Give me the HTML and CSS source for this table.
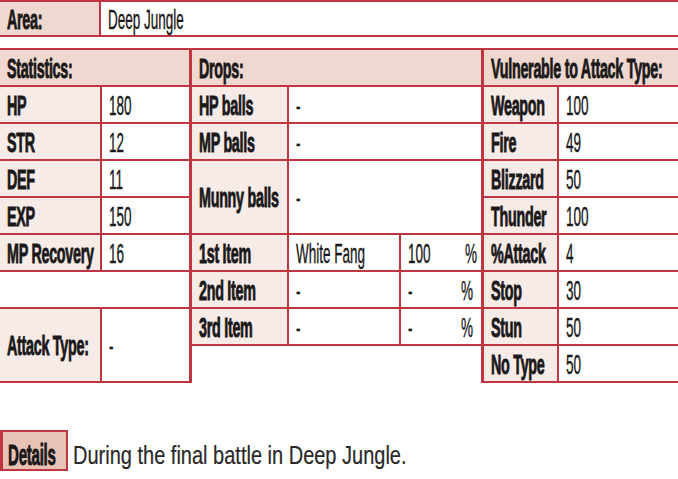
FILE: index.html
```html
<!DOCTYPE html>
<html>
<head>
<meta charset="utf-8">
<link rel="stylesheet" href="styles.css">
</head>
<body>
<div class="area">
  <div class="cell hd"><span class="t b">Area:</span></div>
  <div class="cell val"><span class="t">Deep Jungle</span></div>
</div>

<div class="main">
  <div class="col stats">
    <div class="cell hd span2"><span class="t b">Statistics:</span></div>
    <div class="cell lbl"><span class="t b">HP</span></div>
    <div class="cell val"><span class="t">180</span></div>
    <div class="cell lbl"><span class="t b">STR</span></div>
    <div class="cell val"><span class="t">12</span></div>
    <div class="cell lbl"><span class="t b">DEF</span></div>
    <div class="cell val"><span class="t">11</span></div>
    <div class="cell lbl"><span class="t b">EXP</span></div>
    <div class="cell val"><span class="t">150</span></div>
    <div class="cell lbl"><span class="t b">MP Recovery</span></div>
    <div class="cell val"><span class="t">16</span></div>
    <div class="cell val span2"></div>
    <div class="cell lbl rows2"><span class="t b">Attack Type:</span></div>
    <div class="cell val rows2"><span class="t">-</span></div>
  </div>

  <div class="col drops">
    <div class="cell hd span3"><span class="t b">Drops:</span></div>
    <div class="cell lbl"><span class="t b">HP balls</span></div>
    <div class="cell val span2"><span class="t">-</span></div>
    <div class="cell lbl"><span class="t b">MP balls</span></div>
    <div class="cell val span2"><span class="t">-</span></div>
    <div class="cell lbl rows2"><span class="t b">Munny balls</span></div>
    <div class="cell val span2 rows2"><span class="t">-</span></div>
    <div class="cell lbl"><span class="t b">1st Item</span></div>
    <div class="cell val"><span class="t">White Fang</span></div>
    <div class="cell val pct"><span class="t">100</span><span class="t r">%</span></div>
    <div class="cell lbl"><span class="t b">2nd Item</span></div>
    <div class="cell val"><span class="t">-</span></div>
    <div class="cell val pct"><span class="t">-</span><span class="t r">%</span></div>
    <div class="cell lbl"><span class="t b">3rd Item</span></div>
    <div class="cell val"><span class="t">-</span></div>
    <div class="cell val pct"><span class="t">-</span><span class="t r">%</span></div>
    <div class="cell val span3 tail"></div>
  </div>

  <div class="col vuln">
    <div class="cell hd span2"><span class="t b">Vulnerable to Attack Type:</span></div>
    <div class="cell lbl"><span class="t b">Weapon</span></div>
    <div class="cell val"><span class="t">100</span></div>
    <div class="cell lbl"><span class="t b">Fire</span></div>
    <div class="cell val"><span class="t">49</span></div>
    <div class="cell lbl"><span class="t b">Blizzard</span></div>
    <div class="cell val"><span class="t">50</span></div>
    <div class="cell lbl"><span class="t b">Thunder</span></div>
    <div class="cell val"><span class="t">100</span></div>
    <div class="cell lbl"><span class="t b">%Attack</span></div>
    <div class="cell val"><span class="t">4</span></div>
    <div class="cell lbl"><span class="t b">Stop</span></div>
    <div class="cell val"><span class="t">30</span></div>
    <div class="cell lbl"><span class="t b">Stun</span></div>
    <div class="cell val"><span class="t">50</span></div>
    <div class="cell lbl"><span class="t b">No Type</span></div>
    <div class="cell val"><span class="t">50</span></div>
  </div>
</div>

<div class="details">
  <div class="details-tag"><span class="t b">Details</span></div>
  <p class="details-text"><span class="t">During the final battle in Deep Jungle.</span></p>
</div>
</body>
</html>
```

FILE: styles.css
```css
html, body {
  margin: 0;
  padding: 0;
  background: #ffffff;
}
body {
  width: 678px;
  overflow: hidden;
  font-family: "Liberation Sans", Arial, sans-serif;
  font-size: 27px;
  color: #1a1818;
}

.t {
  display: inline-block;
  white-space: nowrap;
  transform: scaleX(0.5);
  transform-origin: 0 50%;
  line-height: 1;
  -webkit-text-stroke: 0.4px currentColor;
}
.t.b {
  font-weight: bold;
  letter-spacing: -0.5px;
  transform: scaleX(0.53);
  -webkit-text-stroke: 0.9px currentColor;
}
.t.r {
  transform-origin: 100% 50%;
}

.cell {
  display: flex;
  align-items: center;
  padding-left: 7px;
  padding-top: 3px;
  box-sizing: border-box;
  min-width: 0;
  overflow: visible;
}
.hd { background: #efd8cf; }
.lbl { background: #f7ebe8; }
.val { background: #ffffff; }

.span2 { grid-column: span 2; }
.span3 { grid-column: span 3; }
.rows2 { grid-row: span 2; }

/* Area row */
.area {
  display: grid;
  grid-template-columns: 99px 1fr;
  grid-template-rows: 33px;
  gap: 2px;
  padding: 2px 0;
  background: #bf3640;
}

/* Main table */
.main {
  display: flex;
  margin-top: 11px;
  height: 335px;
}
.col {
  display: grid;
  gap: 2px;
  padding: 2px 0;
  background: #bf3640;
  grid-template-rows: repeat(9, 35px);
}
.stats {
  width: 189px;
  grid-template-columns: 100px 87px;
}
.drops {
  width: 289px;
  border-left: 3px solid #bf3640;
  grid-template-columns: 95px 110px 80px;
  grid-template-rows: repeat(8, 35px) 37px;
  padding-bottom: 0;
}
.vuln {
  flex: 1;
  border-left: 3px solid #bf3640;
  grid-template-columns: 73px 1fr;
}
.pct {
  justify-content: space-between;
  padding-right: 8px;
}

/* Details */
.details {
  display: flex;
  align-items: center;
  margin-top: 47px;
}
.details-tag {
  width: 68px;
  height: 41px;
  box-sizing: border-box;
  border: 2px solid #bf3640;
  border-left-width: 3px;
  background: #e9c2b6;
  display: flex;
  align-items: center;
  padding-left: 5px;
  padding-top: 9px;
  font-size: 29px;
}
.details-tag .t.b {
  transform: scaleX(0.52);
}
.details-text {
  margin: 0 0 0 5px;
  padding-top: 9px;
  font-size: 25px;
  color: #2a2828;
}
.details-text .t {
  transform: scaleX(0.8);
  -webkit-text-stroke: 0.2px currentColor;
}
```
